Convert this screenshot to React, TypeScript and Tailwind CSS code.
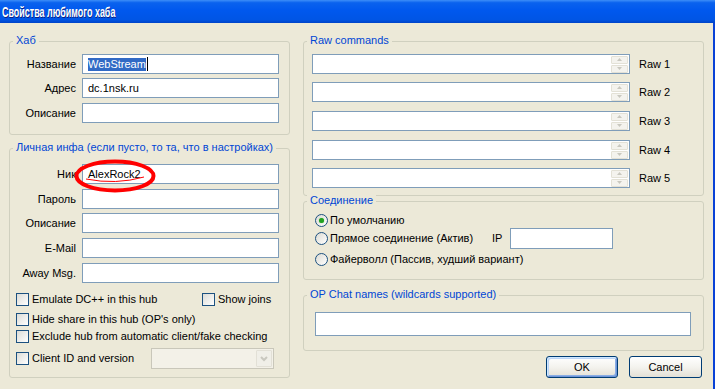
import React from "react";

function Group({ label, className, children }: { label: string; className: string; children?: React.ReactNode }) {
  return (
    <div className={`relative rounded-[3px] border border-[#D0D0BF] ${className}`}>
      <span className="absolute -top-[8px] left-[3px] bg-[#ECE9D8] px-[3px] leading-[13px] text-[#0046D5]">{label}</span>
      {children}
    </div>
  );
}

function Row({ label, children, className = "" }: { label: string; children?: React.ReactNode; className?: string }) {
  return (
    <div className={`flex h-[20px] items-center ${className}`}>
      <span className="w-[66px] text-right">{label}</span>
      <div className="ml-[6px] flex h-[20px] w-[197px] items-center border border-[#7F9DB9] bg-white pl-[5px]">{children}</div>
    </div>
  );
}

function Check({ label, className = "" }: { label: string; className?: string }) {
  return (
    <div className={`flex items-center ${className}`}>
      <span className="h-[13px] w-[13px] shrink-0 border border-[#1C5180] bg-gradient-to-br from-[#DCDCD7] to-[#FFFFFF]" />
      <span className="ml-[3px] whitespace-nowrap">{label}</span>
    </div>
  );
}

function Radio({ label, checked = false, className = "" }: { label: string; checked?: boolean; className?: string }) {
  return (
    <div className={`flex items-center ${className}`}>
      <span className="flex h-[13px] w-[13px] shrink-0 items-center justify-center rounded-full border border-[#1C5180] bg-gradient-to-br from-[#DCDBD3] to-[#FFFFFF]">
        {checked && <span className="h-[5px] w-[5px] rounded-full bg-[#21A121] shadow-[0_0_1px_#5CCB5C]" />}
      </span>
      <span className="ml-[2px] whitespace-nowrap">{label}</span>
    </div>
  );
}

function Spinner() {
  return (
    <div className="ml-auto mr-[1px] flex h-[17px] w-[17px] flex-col gap-[1px]">
      {[0, 1].map((i) => (
        <div key={i} className="flex flex-1 items-center justify-center rounded-[1px] border border-[#E3E1D6] bg-[#F4F3EE]">
          <svg width="5" height="3" viewBox="0 0 5 3">
            {i === 0 ? <path d="M2.5 0 L5 3 L0 3 Z" fill="#C9C8BF" /> : <path d="M0 0 L5 0 L2.5 3 Z" fill="#C9C8BF" />}
          </svg>
        </div>
      ))}
    </div>
  );
}

function RawRow({ n, className = "" }: { n: number; className?: string }) {
  return (
    <div className={`flex h-[20px] items-center ${className}`}>
      <div className="flex h-[20px] w-[318px] items-center border border-[#7F9DB9] bg-white">
        <Spinner />
      </div>
      <span className="ml-[9px]">Raw {n}</span>
    </div>
  );
}

function Button({ label, def = false }: { label: string; def?: boolean }) {
  return (
    <div
      className={`flex h-[22px] items-center justify-center rounded-[3px] border border-[#003C74] bg-gradient-to-b from-[#FFFFFF] via-[#F4F3EE] to-[#E3E0D6] ${
        def ? "w-[72px] shadow-[inset_1px_1px_0_#CEE7FF,inset_-1px_-1px_0_#6E94D8,inset_2px_2px_0_#BCD4F6,inset_-2px_-2px_0_#89ADE4]" : "w-[73px]"
      }`}
    >
      {label}
    </div>
  );
}

export default function App() {
  return (
    <div className="flex h-[389px] w-[715px] flex-col overflow-hidden bg-[#ECE9D8] font-['Liberation_Sans',sans-serif] text-[11px] leading-[13px] text-black">
      <div className="flex h-[23px] shrink-0 items-center bg-[linear-gradient(to_bottom,#3D8EF8_0%,#0A62EE_12%,#0058EE_45%,#0055E5_85%,#0044C8_100%)] pl-[2px]">
        <span className="inline-block origin-left scale-x-[0.64] whitespace-nowrap font-['Liberation_Sans',sans-serif] text-[14px] font-bold leading-[16px] text-white [text-shadow:1px_1px_0_#0A1E80]">
          Свойства любимого хаба
        </span>
      </div>
      <div className="flex flex-1 border-r-[2px] border-[#0841D6]">
        <div className="ml-[9px] flex w-[281px] flex-col">
          <Group label="Хаб" className="mt-[18px] h-[94px] pt-[12px]">
            <Row label="Название">
              <span className="bg-[#316AC5] leading-[13px] text-white">WebStream</span>
              <span className="ml-[1px] h-[14px] w-[1px] bg-black" />
            </Row>
            <Row label="Адрес" className="mt-[4px]">
              <span>dc.1nsk.ru</span>
            </Row>
            <Row label="Описание" className="mt-[5px]" />
          </Group>
          <Group label="Личная инфа (если пусто, то та, что в настройках)" className="mt-[13px] h-[230px] pt-[15px]">
            <Row label="Ник">
              <span>AlexRock2</span>
            </Row>
            <Row label="Пароль" className="mt-[5px]" />
            <Row label="Описание" className="mt-[4px]" />
            <Row label="E-Mail" className="mt-[5px]" />
            <Row label="Away Msg." className="mt-[5px]" />
            <div className="mt-[8px] flex h-[16px] items-center pl-[6px]">
              <Check label="Emulate DC++ in this hub" className="w-[186px]" />
              <Check label="Show joins" />
            </div>
            <div className="mt-[4px] flex h-[16px] items-center pl-[6px]">
              <Check label="Hide share in this hub (OP's only)" />
            </div>
            <div className="mt-[1px] flex h-[16px] items-center pl-[6px]">
              <Check label="Exclude hub from automatic client/fake checking" />
            </div>
            <div className="mt-[4px] flex h-[21px] items-center pl-[6px]">
              <Check label="Client ID and version" className="w-[135px]" />
              <div className="flex h-[21px] w-[123px] items-center border border-[#C9C7BA] bg-[#F3F1E8] p-[1px]">
                <div className="ml-auto flex h-[17px] w-[16px] items-center justify-center rounded-[1px] border border-[#E2E0D6] bg-[#F0EFE8]">
                  <svg width="8" height="6" viewBox="0 0 8 6">
                    <path d="M1 1 L4 4 L7 1" stroke="#C9C8BF" strokeWidth="2" fill="none" />
                  </svg>
                </div>
              </div>
            </div>
            <svg className="pointer-events-none absolute left-[64px] top-[9px]" width="86" height="38" viewBox="0 0 86 38">
              <ellipse cx="41" cy="18" rx="38.5" ry="14.5" fill="none" stroke="#FF0000" strokeWidth="4" />
              <path d="M12 21 Q 42 27 70 19" fill="none" stroke="#FF0000" strokeWidth="1" />
            </svg>
          </Group>
        </div>
        <div className="ml-[13px] flex w-[401px] flex-col">
          <Group label="Raw commands" className="mt-[18px] h-[155px] pl-[8px] pt-[12px]">
            <RawRow n={1} />
            <RawRow n={2} className="mt-[8px]" />
            <RawRow n={3} className="mt-[9px]" />
            <RawRow n={4} className="mt-[9px]" />
            <RawRow n={5} className="mt-[8px]" />
          </Group>
          <Group label="Соединение" className="mt-[5px] h-[79px] pl-[11px] pt-[10px]">
            <Radio label="По умолчанию" checked className="h-[16px]" />
            <div className="flex h-[21px] items-center">
              <Radio label="Прямое соединение (Актив)" className="w-[177px]" />
              <span className="w-[18px]">IP</span>
              <div className="h-[21px] w-[103px] border border-[#7F9DB9] bg-white" />
            </div>
            <Radio label="Файерволл (Пассив, худший вариант)" className="mt-[2px] h-[16px]" />
          </Group>
          <Group label="OP Chat names (wildcards supported)" className="mt-[15px] h-[56px] pl-[11px] pt-[16px]">
            <div className="h-[24px] w-[376px] border border-[#7F9DB9] bg-white" />
          </Group>
          <div className="mt-[5px] flex justify-end gap-[11px] pr-[2px]">
            <Button label="OK" def />
            <Button label="Cancel" />
          </div>
        </div>
      </div>
    </div>
  );
}
